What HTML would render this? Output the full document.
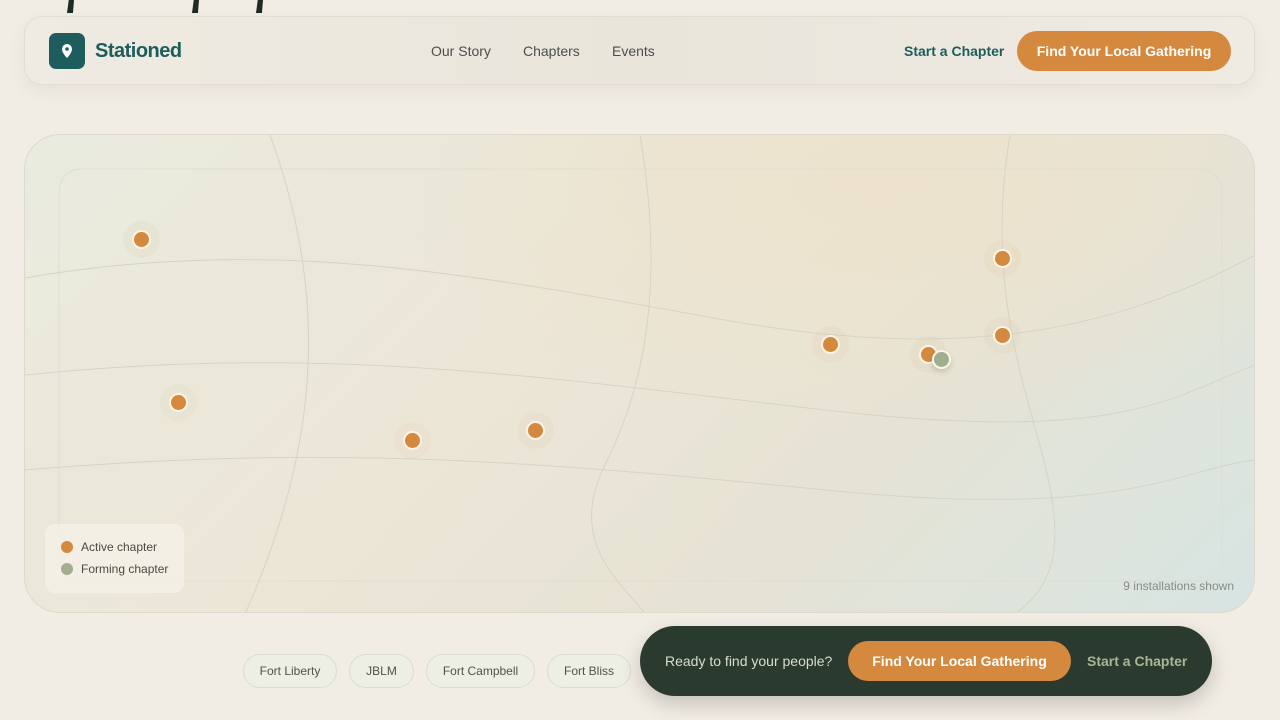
<!DOCTYPE html>
<html><head><meta charset="utf-8"><style>
*{box-sizing:border-box;margin:0;padding:0}
body{width:1280px;height:720px;overflow:hidden;background:#f1ece4;font-family:"Liberation Sans",sans-serif;position:relative}
.frag{position:absolute;top:0;width:7px;height:13px;background:#1e2a24;clip-path:polygon(25% 0,100% 0,85% 100%,0 100%)}
.nav{position:absolute;left:24px;top:16px;width:1231px;height:69px;border-radius:18px;background:linear-gradient(90deg,#efebe2,#e9e5db 50%,#efebe3);border:1px solid #e2ddd2;box-shadow:0 6px 18px rgba(0,0,0,.05)}
.logo{position:absolute;left:24px;top:16px;width:36px;height:36px;border-radius:7px;background:#1e5d5e}
.brand{position:absolute;left:70px;top:23px;font-size:20px;font-weight:bold;color:#1e5d5e;letter-spacing:-.5px}
.links{position:absolute;top:26px;font-size:14px;color:#4a4f4c}
.sc{position:absolute;left:879px;top:26px;font-size:14px;font-weight:bold;color:#1e5d5e}
.btn{position:absolute;background:#d4893f;color:#fff;font-weight:bold;font-size:14px;border-radius:22px;text-align:center}
.map{position:absolute;left:24px;top:134px;width:1231px;height:479px;border-radius:36px;border:1px solid #dcdad0;overflow:hidden;background:radial-gradient(ellipse at 70% 10%,#ede3cc 0,rgba(237,227,204,0) 40%),linear-gradient(135deg,#e9ebdf 0%,#ece6d7 40%,#e7e3d4 65%,#d7e4e2 100%)}
.pin{position:absolute;width:19px;height:19px;border-radius:50%;background:#d4893f;border:2px solid #fbf4e8;box-shadow:0 0 0 9px rgba(220,190,150,.1)}
.g{background:#9fae8e;box-shadow:0 3px 6px rgba(0,0,0,.15)}
.legend{position:absolute;left:20px;top:389px;width:139px;height:69px;border-radius:10px;background:rgba(244,240,230,.85);font-size:12px;color:#4a4a44}
.legend div{position:absolute;left:16px;display:flex;align-items:center}
.legend i{display:inline-block;width:12px;height:12px;border-radius:50%;margin-right:8px}
.count{position:absolute;right:20px;top:444px;font-size:12px;color:#8a8c86}
.chip{position:absolute;top:654px;height:34px;border-radius:17px;border:1px solid #d9ddd0;background:#edefe4;font-size:12px;color:#4e534d;line-height:32px;text-align:center}
.bar{position:absolute;left:640px;top:626px;width:572px;height:70px;border-radius:35px;background:#2b3a2f;box-shadow:0 8px 20px rgba(0,0,0,.18)}
</style></head><body>
<div class="frag" style="left:67px"></div><div class="frag" style="left:192px"></div><div class="frag" style="left:256px"></div>
<div class="nav">
<div class="logo"><svg width="36" height="36" viewBox="0 0 36 36"><path d="M18 11a5 5 0 0 0-5 5c0 4 5 9 5 9s5-5 5-9a5 5 0 0 0-5-5z" fill="#fff"/><circle cx="18" cy="16" r="1.8" fill="#1e5d5e"/></svg></div>
<div class="brand">Stationed</div>
<div class="links" style="left:406px">Our Story</div>
<div class="links" style="left:498px">Chapters</div>
<div class="links" style="left:587px">Events</div>
<div class="sc">Start a Chapter</div>
<div class="btn" style="left:992px;top:14px;width:214px;height:40px;line-height:40px">Find Your Local Gathering</div>
</div>
<div class="map">
<svg width="1230" height="479" style="position:absolute;left:0;top:0" fill="none" stroke="#d6d3c6" stroke-width="1">
<rect x="34" y="34" width="1163" height="412" rx="22" stroke="#e0ddd2"/>
<path d="M0 143 C250 100 450 140 700 185 S1100 190 1230 120"/>
<path d="M0 240 C300 210 500 240 800 275 S1150 260 1230 230"/>
<path d="M0 335 C300 310 500 325 800 355 S1150 335 1230 325"/>
<path d="M245 0 C300 150 300 300 220 479"/>
<path d="M615 0 C640 150 620 250 580 330 S600 450 620 479"/>
<path d="M985 0 C960 150 1000 250 1020 330 S1030 450 990 479"/>
</svg>
<div class="pin" style="left:107px;top:95px"></div>
<div class="pin" style="left:144px;top:258px"></div>
<div class="pin" style="left:378px;top:296px"></div>
<div class="pin" style="left:501px;top:286px"></div>
<div class="pin" style="left:796px;top:200px"></div>
<div class="pin" style="left:894px;top:210px"></div>
<div class="pin g" style="left:907px;top:215px"></div>
<div class="pin" style="left:968px;top:114px"></div>
<div class="pin" style="left:968px;top:191px"></div>
<div class="legend">
<div style="top:16px"><i style="background:#d4893f"></i>Active chapter</div>
<div style="top:38px"><i style="background:#a3ad8f"></i>Forming chapter</div>
</div>
<div class="count">9 installations shown</div>
</div>
<div class="chip" style="left:243px;width:94px">Fort Liberty</div>
<div class="chip" style="left:349px;width:65px">JBLM</div>
<div class="chip" style="left:426px;width:109px">Fort Campbell</div>
<div class="chip" style="left:547px;width:84px">Fort Bliss</div>
<div class="bar">
<div style="position:absolute;left:25px;top:27px;font-size:14px;color:#d8ddd0">Ready to find your people?</div>
<div class="btn" style="left:208px;top:15px;width:223px;height:40px;line-height:40px">Find Your Local Gathering</div>
<div style="position:absolute;left:447px;top:27px;font-size:14px;font-weight:bold;color:#a9b596">Start a Chapter</div>
</div>
</body></html>
